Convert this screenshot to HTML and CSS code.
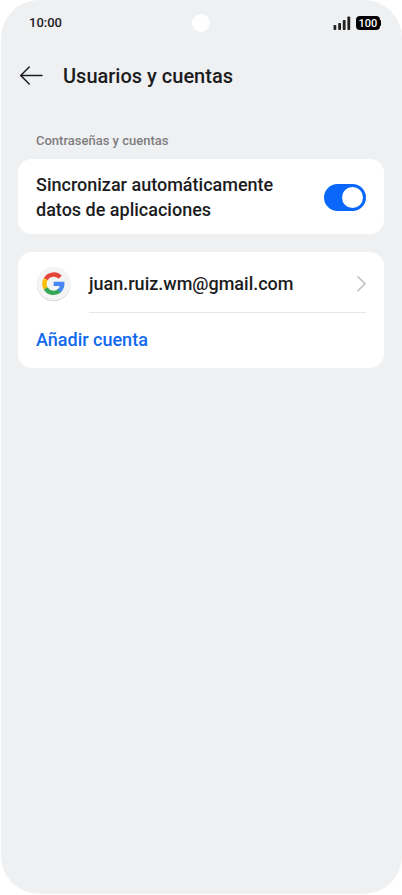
FILE: index.html
```html
<!DOCTYPE html>
<html lang="es">
  <head>
    <meta charset="UTF-8" />
    <meta name="viewport" content="width=device-width, initial-scale=1.0" />
    <title>Usuarios y cuentas</title>
    <link rel="stylesheet" href="styles.css">
  </head>
  <body>
    <div class="screen">
      <div class="status">
        <span class="time">10:00</span>
        <span class="camera"></span>
        <div class="status-icons">
          <svg class="signal" width="18" height="14" viewBox="0 0 18 14" fill="#222">
            <rect x="0.5" y="9" width="2.8" height="5" rx="0.8" />
            <rect x="5.2" y="7" width="2.8" height="7" rx="0.8" />
            <rect x="9.8" y="4" width="2.8" height="10" rx="0.8" />
            <rect x="14.4" y="0.5" width="2.8" height="13.5" rx="0.8" />
          </svg>
          <span class="battery">100</span>
        </div>
      </div>
      <header class="header">
        <button type="button" class="back" aria-label="Atrás">
          <svg width="24" height="20" viewBox="0 0 24 20" fill="none" stroke="#1c1c1e" stroke-width="1.5" stroke-linecap="round" stroke-linejoin="round">
            <path d="M23 9.5H1.7M10.2 1L1.7 9.5l8.5 8.5" />
          </svg>
        </button>
        <h1>Usuarios y cuentas</h1>
      </header>
      <main>
        <h2>Contraseñas y cuentas</h2>
        <section class="card sync">
          <label for="sync">Sincronizar automáticamente datos de aplicaciones</label>
          <input type="checkbox" role="switch" class="switch" id="sync" checked>
        </section>
        <section class="card">
          <a href="#" class="account">
            <svg class="google" width="36" height="36" viewBox="0 0 36 36">
              <circle cx="17.6" cy="18.4" r="16.8" fill="#d3d3d3" />
              <circle cx="17.6" cy="17.6" r="16.8" fill="#f4f4f4" />
              <g fill="none" stroke-width="4.4">
                <path d="M9.7 13.1A9.2 9.2 0 0 1 24.2 11.2" stroke="#e5443a" />
                <path d="M9.7 22.3A9.2 9.2 0 0 1 9.7 13.1" stroke="#fabd0b" />
                <path d="M23.7 24.6A9.2 9.2 0 0 1 9.7 22.3" stroke="#35a655" />
              </g>
              <path d="M17.7 15.7h10.7c.5 4.6-.9 8.2-3.5 10.6l-3.6-2.8c1.3-.8 2.2-2 2.5-3.5h-6.1z" fill="#4687f3" />
            </svg>
            <span class="mail">juan.ruiz.wm@gmail.com</span>
            <svg class="chevron" width="10" height="16" viewBox="0 0 10 16" fill="none" stroke="#bdbdbd" stroke-width="1.5" stroke-linecap="round" stroke-linejoin="round">
              <path d="M1.9 0.8L9.1 7.8l-7.2 7" />
            </svg>
          </a>
          <a href="#" class="add">Añadir cuenta</a>
        </section>
      </main>
    </div>
  </body>
</html>
```
FILE: styles.css
```css
* {
  box-sizing: border-box;
}
body {
  margin: 0;
  padding: 0 0 1px 1px;
  background-color: #fff;
  color: #1c1c1e;
  font-family: Roboto, sans-serif;
  font-weight: 500;
}
h1,
h2 {
  margin: 0;
  font-weight: 500;
}
a {
  color: inherit;
  text-decoration: none;
}
svg {
  display: block;
  flex: none;
}
.screen {
  min-height: calc(100vh - 1px);
  border-radius: 38px;
  background-color: #eff0f2;
}
.status {
  display: grid;
  grid-template-columns: 1fr 18px 1fr;
  align-items: center;
  height: 46px;
  padding: 0 22px 0 28px;
}
.time {
  padding-bottom: 2px;
  font-size: 13px;
}
.camera {
  position: relative;
  left: -4px;
  width: 18px;
  height: 18px;
  border-radius: 50%;
  background-color: #fff;
}
.status-icons {
  display: flex;
  justify-content: flex-end;
  align-items: center;
  gap: 5px;
}
.battery {
  position: relative;
  width: 24px;
  height: 14px;
  border-radius: 4px;
  background-color: #000;
  color: #fff;
  font-size: 11px;
  line-height: 15px;
  text-align: center;
}
.battery::after {
  content: '';
  position: absolute;
  top: 4px;
  right: -1px;
  width: 2px;
  height: 6px;
  border-radius: 1px;
  background-color: #000;
}
.header {
  display: flex;
  align-items: center;
  gap: 20px;
  height: 60px;
  padding: 0 18px;
}
.back {
  padding: 0;
  border: 0;
  background: none;
}
h1 {
  font-size: 20px;
  line-height: 24px;
}
main {
  padding: 27px 18px 0 17px;
}
h2 {
  margin-bottom: 10px;
  padding: 0 18px;
  color: #7d7d7f;
  font-size: 13px;
  line-height: 16px;
}
.card {
  margin-bottom: 18px;
  padding: 0 18px;
  border-radius: 14px;
  background-color: #fff;
  font-size: 18px;
  line-height: 25px;
}
.sync {
  display: flex;
  justify-content: space-between;
  align-items: center;
  gap: 40px;
  padding-top: 13px;
  padding-bottom: 12px;
}
.switch {
  flex: none;
  width: 42px;
  height: 27px;
  margin: 0;
  padding: 3px;
  border-radius: 14px;
  background-color: #c8c8ca;
  appearance: none;
}
.switch::before {
  content: '';
  display: block;
  width: 21px;
  height: 21px;
  border-radius: 50%;
  background-color: #fff;
}
.switch:checked {
  background-color: #0a67fb;
}
.switch:checked::before {
  margin-left: auto;
}
.account {
  display: grid;
  grid-template-columns: 36px 1fr 10px;
  column-gap: 17px;
  align-items: center;
  padding-top: 14px;
}
.mail {
  padding-bottom: 2px;
}
/* the line starts under the address, not under the logo */
.account::after {
  content: '';
  grid-column: 2 / 4;
  height: 1px;
  margin-top: 10px;
  background-color: #e6e6e8;
}
.add {
  display: block;
  padding: 14px 0 16px;
  color: #1169ee;
}
```
